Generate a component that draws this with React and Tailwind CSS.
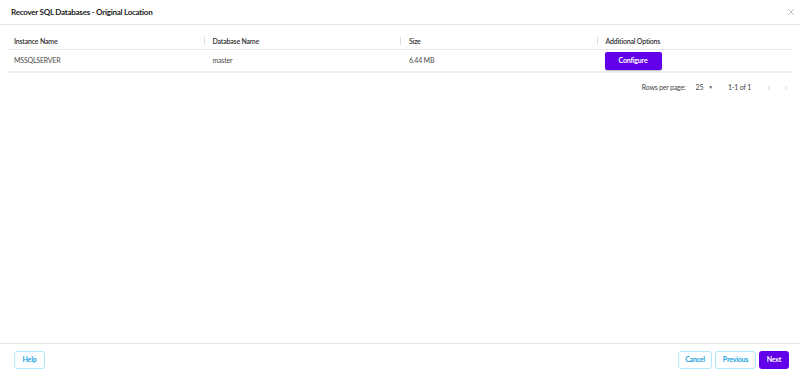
import { ChevronLeft, ChevronRight, X } from "lucide-react"

const columns = ["Instance Name", "Database Name", "Size", "Additional Options"]

function OutlineButton({ children, className = "" }) {
  return (
    <button
      className={`h-[18px] rounded-[3px] border border-[#b3e5fc] bg-white text-[7px] font-bold tracking-[-0.2px] text-[#1aa3de] ${className}`}
    >
      {children}
    </button>
  )
}

export default function App() {
  return (
    <div
      className="flex h-[375px] w-full flex-col bg-white text-[#333]"
      style={{ fontFamily: "Lato, 'Open Sans', sans-serif" }}
    >
      {/* Header */}
      <div className="flex h-[25px] items-center justify-between border-b border-[#e6e6e6] pl-[11px] pr-[4px]">
        <h1 className="text-[8px] font-bold tracking-[-0.25px] text-[#222]">Recover SQL Databases - Original Location</h1>
        <X className="h-[10px] w-[10px] text-[#888]" strokeWidth={1.3} />
      </div>

      {/* Table */}
      <div className="flex-1 px-[7px] pt-[8px]">
        <div className="rounded-[2px] shadow-[0_1px_1px_rgba(0,0,0,0.015)]">
          <div className="grid grid-cols-4 border-b border-[#e8e8e8]">
            {columns.map((c, i) => (
              <div key={c} className="flex h-[16px] items-center">
                {i > 0 && <div className="mr-[8px] h-[8px] w-px bg-[#e0e0e0]" />}
                <span className={`text-[7px] font-semibold tracking-[-0.2px] text-[#333] ${i === 0 ? "pl-[7px]" : ""}`}>{c}</span>
              </div>
            ))}
          </div>
          <div className="grid h-[23px] grid-cols-4 items-center border-b-2 border-[#f0f0f0] text-[7px] tracking-[-0.2px] text-[#4a4a4a]">
            <span className="pl-[7px]">MSSQLSERVER</span>
            <span className="pl-[9px]">master</span>
            <span className="pl-[9px]">6.44 MB</span>
            <div className="pl-[8px]">
              <button className="h-[18px] w-[57px] rounded-[2px] bg-[#6200ea] text-[7px] font-bold tracking-[-0.2px] text-white shadow-[0_1px_1px_rgba(0,0,0,0.25)]">
                Configure
              </button>
            </div>
          </div>
          <div className="flex h-[29px] items-center justify-end text-[7px] tracking-[-0.2px] text-[#444]">
            <span>Rows per page:</span>
            <span className="ml-[10px]">25</span>
            <span className="ml-[5px] text-[5px] text-[#666]">▼</span>
            <span className="ml-[15px]">1-1 of 1</span>
            <ChevronLeft className="ml-[14px] h-[8px] w-[8px] text-[#aaa]" strokeWidth={1.5} />
            <ChevronRight className="ml-[9px] mr-[3px] h-[8px] w-[8px] text-[#aaa]" strokeWidth={1.5} />
          </div>
        </div>
      </div>

      {/* Footer */}
      <div className="flex h-[32px] items-center justify-between border-t border-[#e6e6e6] pl-[14px] pr-[11px]">
        <OutlineButton className="w-[31px]">Help</OutlineButton>
        <div className="flex gap-[3px]">
          <OutlineButton className="w-[34px]">Cancel</OutlineButton>
          <OutlineButton className="w-[41px]">Previous</OutlineButton>
          <button className="h-[18px] w-[30px] rounded-[3px] bg-[#6200ea] text-[7px] font-bold tracking-[-0.2px] text-white">
            Next
          </button>
        </div>
      </div>
    </div>
  )
}
